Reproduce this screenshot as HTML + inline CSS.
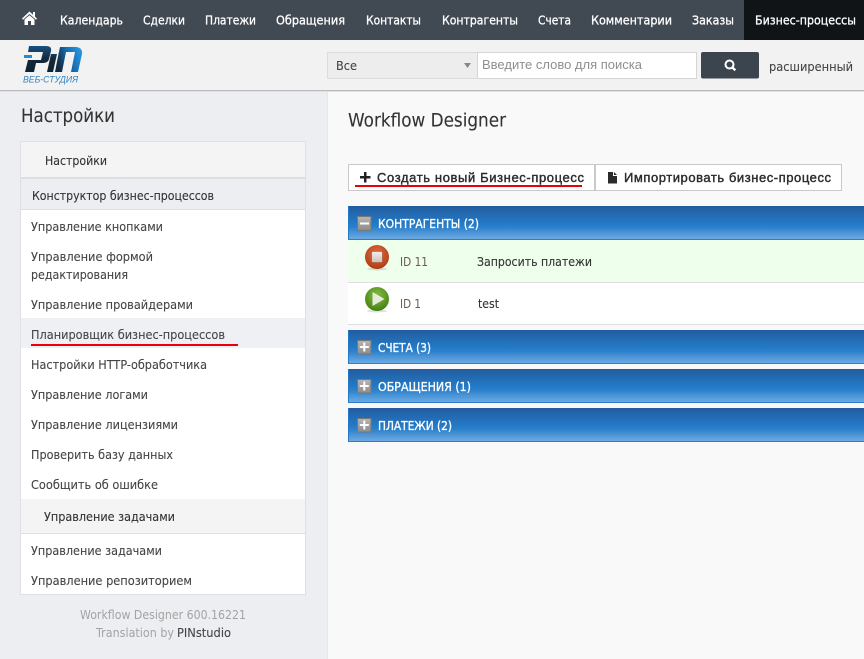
<!DOCTYPE html>
<html lang="ru"><head><meta charset="utf-8"><title>Workflow Designer</title>
<style>
html,body{margin:0;padding:0;width:864px;height:659px;overflow:hidden;background:#f9f9f9}
svg{display:block}
text{font-family:"DejaVu Sans","Liberation Sans",sans-serif;font-size:12.5px;fill:#444}
.n{font-size:12.5px;fill:#fff;stroke:#fff;stroke-width:.3}
.s{fill:#444;stroke:#444;stroke-width:.1}
.d{fill:#333;stroke:#333;stroke-width:.12}
.h{font-size:19px;fill:#333;stroke:#333;stroke-width:.1}
.b{font-family:"Liberation Sans",sans-serif;font-size:13px;fill:#2b2b2b;stroke:#2b2b2b;stroke-width:.4}
.w{font-size:12.5px;fill:#fff;stroke:#fff;stroke-width:.35}
.g{fill:#a3a3a3}
</style></head><body>
<svg width="864" height="659" viewBox="0 0 864 659" xmlns="http://www.w3.org/2000/svg">
<defs>
<linearGradient id="bl" x1="0" y1="0" x2="0" y2="1">
<stop offset="0" stop-color="#235c9e"/><stop offset=".5" stop-color="#2379c6"/><stop offset=".62" stop-color="#2b80cc"/><stop offset="1" stop-color="#72aee4"/>
</linearGradient>
<linearGradient id="lg" gradientUnits="userSpaceOnUse" x1="0" y1="46" x2="0" y2="72"><stop offset="0" stop-color="#1a4f80"/><stop offset=".5" stop-color="#14293d"/><stop offset="1" stop-color="#10202f"/></linearGradient>
<linearGradient id="lb" gradientUnits="userSpaceOnUse" x1="56" y1="60" x2="82" y2="50"><stop offset="0" stop-color="#14293d"/><stop offset=".45" stop-color="#1668ab"/><stop offset="1" stop-color="#2a9be6"/></linearGradient>
<radialGradient id="red" cx=".5" cy=".35" r=".7"><stop offset="0" stop-color="#dd6e40"/><stop offset=".8" stop-color="#b8431a"/><stop offset="1" stop-color="#9c3512"/></radialGradient>
<radialGradient id="grn" cx=".5" cy=".35" r=".7"><stop offset="0" stop-color="#86bb48"/><stop offset=".8" stop-color="#4d8a18"/><stop offset="1" stop-color="#3c730e"/></radialGradient>
<linearGradient id="gb" x1="0" y1="0" x2="0" y2="1"><stop offset="0" stop-color="#b5b5b5"/><stop offset="1" stop-color="#8c8c8c"/></linearGradient>
<linearGradient id="sq" x1="0" y1="0" x2="0" y2="1"><stop offset="0" stop-color="#f4efec"/><stop offset="1" stop-color="#cdbfb8"/></linearGradient>
</defs>

<rect width="864" height="659" fill="#f9f9f9"/>
<!-- top nav -->
<rect width="864" height="40" fill="#414953"/>
<rect x="744" width="120" height="40" fill="#111417"/>
<path d="M22 18.500 L29.500 11.500 L33 14.800 V12 H35 V16.700 L37 18.500 L36 19.800 L29.500 14 L23 19.800Z M24.500 19.500 L29.500 15.300 L34.500 19.500 V25 H31 V21 H28 V25 H24.500Z" fill="#fff"/>
<text class="n" x="60" y="24.500" textLength="63" lengthAdjust="spacingAndGlyphs">Календарь</text>
<text class="n" x="143" y="24.500" textLength="42" lengthAdjust="spacingAndGlyphs">Сделки</text>
<text class="n" x="205" y="24.500" textLength="51" lengthAdjust="spacingAndGlyphs">Платежи</text>
<text class="n" x="276" y="24.500" textLength="69" lengthAdjust="spacingAndGlyphs">Обращения</text>
<text class="n" x="366" y="24.500" textLength="55" lengthAdjust="spacingAndGlyphs">Контакты</text>
<text class="n" x="442" y="24.500" textLength="76" lengthAdjust="spacingAndGlyphs">Контрагенты</text>
<text class="n" x="538" y="24.500" textLength="33" lengthAdjust="spacingAndGlyphs">Счета</text>
<text class="n" x="591" y="24.500" textLength="81" lengthAdjust="spacingAndGlyphs">Комментарии</text>
<text class="n" x="692" y="24.500" textLength="42" lengthAdjust="spacingAndGlyphs">Заказы</text>
<text class="n" x="755" y="24.500" textLength="101" lengthAdjust="spacingAndGlyphs">Бизнес-процессы</text>

<!-- sub header -->
<rect y="40" width="864" height="50" fill="#f2f2f2"/>
<rect y="90" width="864" height="1" fill="#b9b9b9"/>
<rect y="91" width="864" height="1" fill="#e2e2e2"/>
<!-- logo -->
<path d="M29 46 H46 Q52 46 51 51 L49 59 Q48 63 43 63 H36 L34 72 H25 L28 60 H41 L43 52 H28Z" fill="url(#lg)"/>
<rect x="24" y="55" width="8" height="3" fill="#2a8ad0"/>
<path d="M51 54 H57 L53 72 H47Z" fill="url(#lg)"/>
<path d="M60 47 H72 Q83 46 82 54 L78 72 H71 L75 52 H66 L62 72 H55 L58.500 54Z" fill="url(#lb)"/>
<text x="23" y="82.500" font-style="italic" style="font-family:'Liberation Sans',sans-serif;font-size:9.500px;fill:#2f84c4" textLength="55" lengthAdjust="spacingAndGlyphs">ВЕБ-СТУДИЯ</text>
<!-- search -->
<rect x="327.500" y="52.500" width="150" height="26" fill="#ededed" stroke="#dcdcdc"/>
<text class="s" x="336" y="70" textLength="21" lengthAdjust="spacingAndGlyphs">Все</text>
<path d="M464 63 h7 l-3.500 5z" fill="#888"/>
<rect x="477.500" y="52.500" width="219" height="26" fill="#fff" stroke="#d5d5d5"/>
<text x="482" y="69" style="font-family:'Liberation Sans',sans-serif;font-size:13px;fill:#8f8f8f" textLength="160" lengthAdjust="spacingAndGlyphs">Введите слово для поиска</text>
<rect x="701" y="52" width="58" height="26.500" rx="2" fill="#3c444e"/>
<circle cx="729.500" cy="64.500" r="4" fill="none" stroke="#fff" stroke-width="2"/>
<path d="M732.300 67.300 L735.300 70.300" stroke="#fff" stroke-width="2.400"/>
<text class="s" x="769" y="71" textLength="84" lengthAdjust="spacingAndGlyphs">расширенный</text>

<!-- sidebar -->
<rect y="92" width="327" height="567" fill="#edeef2"/>
<rect x="327" y="92" width="1" height="567" fill="#e6e6e9"/>
<text class="h" x="21" y="122" textLength="94" lengthAdjust="spacingAndGlyphs">Настройки</text>

<rect x="20.500" y="141.500" width="285" height="453" fill="#fff" stroke="#dfe0e3"/>
<rect x="21" y="142" width="284" height="36" fill="#f4f4f4"/>
<rect x="21" y="177" width="284" height="2" fill="#dfdfe2"/>
<rect x="21" y="179" width="284" height="30" fill="#edeef2"/>
<rect x="21" y="209" width="284" height="1" fill="#dfe0e3"/>
<text class="d" x="45" y="165" textLength="62" lengthAdjust="spacingAndGlyphs">Настройки</text>
<text class="d" x="32" y="200" textLength="182" lengthAdjust="spacingAndGlyphs">Конструктор бизнес-процессов</text>

<rect x="21" y="318" width="284" height="30" fill="#eff0f3"/>
<text class="s" x="31" y="231" textLength="132" lengthAdjust="spacingAndGlyphs">Управление кнопками</text>
<text class="s" x="31" y="261" textLength="122" lengthAdjust="spacingAndGlyphs">Управление формой</text>
<text class="s" x="31" y="279" textLength="97" lengthAdjust="spacingAndGlyphs">редактирования</text>
<text class="s" x="31" y="309" textLength="162" lengthAdjust="spacingAndGlyphs">Управление провайдерами</text>
<text class="s" x="31" y="339" textLength="194" lengthAdjust="spacingAndGlyphs">Планировщик бизнес-процессов</text>
<rect x="31" y="344" width="207" height="2" fill="#e8000b"/>
<text class="s" x="31" y="369" textLength="176" lengthAdjust="spacingAndGlyphs">Настройки HTTP-обработчика</text>
<text class="s" x="31" y="399" textLength="117" lengthAdjust="spacingAndGlyphs">Управление логами</text>
<text class="s" x="31" y="429" textLength="147" lengthAdjust="spacingAndGlyphs">Управление лицензиями</text>
<text class="s" x="31" y="459" textLength="142" lengthAdjust="spacingAndGlyphs">Проверить базу данных</text>
<text class="s" x="31" y="489" textLength="127" lengthAdjust="spacingAndGlyphs">Сообщить об ошибке</text>
<rect x="21" y="499" width="284" height="34" fill="#f4f4f4"/>
<rect x="21" y="533" width="284" height="1" fill="#dfe0e3"/>
<text class="d" x="44" y="521" textLength="131" lengthAdjust="spacingAndGlyphs">Управление задачами</text>
<text class="s" x="31" y="555" textLength="131" lengthAdjust="spacingAndGlyphs">Управление задачами</text>
<text class="s" x="31" y="585" textLength="161" lengthAdjust="spacingAndGlyphs">Управление репозиторием</text>
<text class="g" x="80" y="619" textLength="166" lengthAdjust="spacingAndGlyphs">Workflow Designer 600.16221</text>
<text class="g" x="96" y="637" textLength="78" lengthAdjust="spacingAndGlyphs">Translation by</text>
<text class="s" x="177" y="637" textLength="54" lengthAdjust="spacingAndGlyphs">PINstudio</text>

<!-- main -->
<text class="h" x="348" y="126.500" textLength="158" lengthAdjust="spacingAndGlyphs">Workflow Designer</text>
<rect x="348.500" y="164.500" width="246" height="26" fill="#fff" stroke="#c9c9c9"/>
<rect x="595.500" y="164.500" width="246" height="26" fill="#fff" stroke="#c9c9c9"/>
<path d="M364 172 h2.500 v4 h4 v2.500 h-4 v4 h-2.500 v-4 h-4 v-2.500 h4z" fill="#222"/>
<text class="b" x="377" y="182" textLength="207" lengthAdjust="spacing">Создать новый Бизнес-процесс</text>
<rect x="355" y="185" width="227" height="2" fill="#e8000b"/>
<path d="M608 172 h5 v4 h4 v7.500 h-9z M614 172 l3 3 h-3z" fill="#2b2b2b"/>
<text class="b" x="624" y="182" textLength="207" lengthAdjust="spacing">Импортировать бизнес-процесс</text>

<!-- group 1 -->
<rect x="348" y="206" width="516" height="34" fill="url(#bl)"/>
<rect x="348" y="206" width="1" height="34" fill="#2379c6"/>
<rect x="348" y="239" width="516" height="1" fill="#2b80cc"/>
<rect x="357.500" y="216.500" width="13.500" height="14" fill="url(#gb)" stroke="#777"/>
<rect x="360" y="222.500" width="9" height="2" fill="#fff"/>
<text class="w" x="378" y="228" textLength="101" lengthAdjust="spacingAndGlyphs">КОНТРАГЕНТЫ (2)</text>
<rect x="348" y="240" width="516" height="42" fill="#eeffec"/>
<rect x="348" y="282" width="516" height="1" fill="#dedede"/>
<rect x="348" y="283" width="516" height="41" fill="#fff"/>
<rect x="348" y="324" width="516" height="1" fill="#dedede"/>
<ellipse cx="377" cy="269" rx="10" ry="1.500" fill="#d4e0d0"/>
<circle cx="377" cy="257" r="12" fill="url(#red)"/>
<rect x="371.500" y="251.500" width="11" height="11" rx="1" fill="url(#sq)" stroke="#a94a28" stroke-width=".6"/>
<text x="400" y="266" style="fill:#6b5a50" textLength="28" lengthAdjust="spacingAndGlyphs">ID 11</text>
<text class="d" x="477" y="266" textLength="115" lengthAdjust="spacingAndGlyphs">Запросить платежи</text>
<ellipse cx="377" cy="311" rx="10" ry="1.500" fill="#e0e0e0"/>
<circle cx="377" cy="299" r="12" fill="url(#grn)"/>
<path d="M372.500 292 L384.500 299 L372.500 306Z" fill="#e6ead9"/>
<text x="400" y="308" style="fill:#6b5a50" textLength="21" lengthAdjust="spacingAndGlyphs">ID 1</text>
<text class="d" x="478" y="308" textLength="21" lengthAdjust="spacingAndGlyphs">test</text>

<!-- other groups -->
<rect x="348" y="330" width="516" height="34" fill="url(#bl)"/>
<rect x="348" y="330" width="1" height="34" fill="#2379c6"/>
<rect x="348" y="363" width="516" height="1" fill="#2b80cc"/>
<rect x="357.500" y="340.500" width="13.500" height="13.500" fill="url(#gb)" stroke="#777"/>
<path d="M363.300 342.500 h2 v3.500 h3.500 v2 h-3.500 v3.500 h-2 v-3.500 h-3.500 v-2 h3.500z" fill="#fff"/>
<text class="w" x="378" y="352" textLength="53" lengthAdjust="spacingAndGlyphs">СЧЕТА (3)</text>
<rect x="348" y="369" width="516" height="34" fill="url(#bl)"/>
<rect x="348" y="369" width="1" height="34" fill="#2379c6"/>
<rect x="348" y="402" width="516" height="1" fill="#2b80cc"/>
<rect x="357.500" y="379.500" width="13.500" height="13.500" fill="url(#gb)" stroke="#777"/>
<path d="M363.300 381.500 h2 v3.500 h3.500 v2 h-3.500 v3.500 h-2 v-3.500 h-3.500 v-2 h3.500z" fill="#fff"/>
<text class="w" x="378" y="391" textLength="93" lengthAdjust="spacingAndGlyphs">ОБРАЩЕНИЯ (1)</text>
<rect x="348" y="408" width="516" height="34" fill="url(#bl)"/>
<rect x="348" y="408" width="1" height="34" fill="#2379c6"/>
<rect x="348" y="441" width="516" height="1" fill="#2b80cc"/>
<rect x="357.500" y="418.500" width="13.500" height="13.500" fill="url(#gb)" stroke="#777"/>
<path d="M363.300 420.500 h2 v3.500 h3.500 v2 h-3.500 v3.500 h-2 v-3.500 h-3.500 v-2 h3.500z" fill="#fff"/>
<text class="w" x="378" y="430" textLength="74" lengthAdjust="spacingAndGlyphs">ПЛАТЕЖИ (2)</text>
</svg>
</body></html>
